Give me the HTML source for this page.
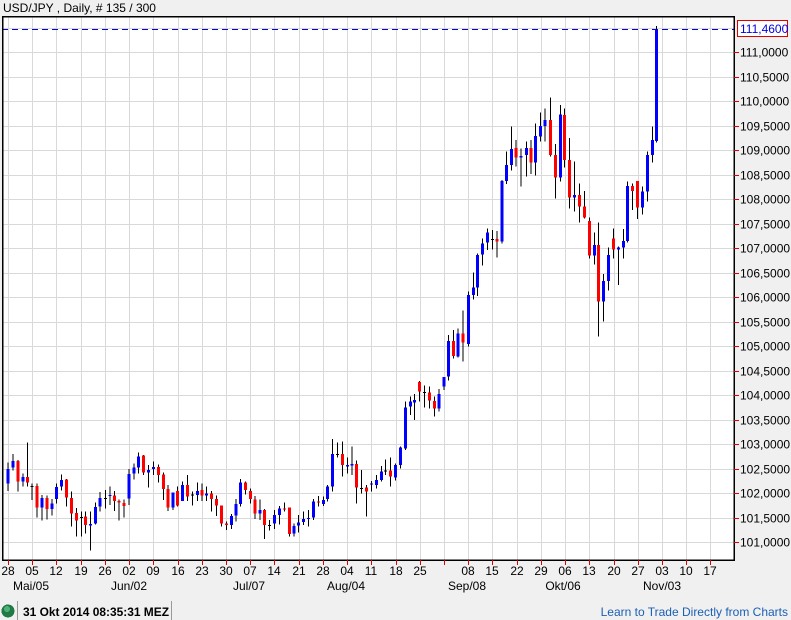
<!DOCTYPE html>
<html><head><meta charset="utf-8"><style>
html,body{margin:0;padding:0;background:#f0f0f0;width:791px;height:620px;overflow:hidden;font-family:"Liberation Sans",Arial,sans-serif}
</style></head><body>
<svg id="s" width="791" height="620" xmlns="http://www.w3.org/2000/svg" font-family="Liberation Sans, Arial, sans-serif" font-size="12" shape-rendering="crispEdges">
<rect x="0" y="0" width="791" height="620" fill="#f0f0f0"/>
<text x="3" y="12" fill="#000">USD/JPY , Daily, # 135 / 300</text>
<rect x="2" y="16" width="732" height="544" fill="#fff"/>
<g id="grid" stroke="#d9d9d9" stroke-width="1"></g>
<line x1="2" y1="29.5" x2="734" y2="29.5" stroke="#0000e0" stroke-dasharray="6,4" stroke-width="1"/>
<g id="c"></g>
<rect x="2.5" y="16.5" width="731.5" height="543.5" fill="none" stroke="#000" stroke-width="1.5"/>
<g id="ax"></g>
<rect x="737.5" y="20.5" width="50" height="16" fill="#fff" stroke="#e00000"/>
<text x="740" y="33" fill="#0000e0">111,4600</text>
<circle cx="8" cy="611" r="6.5" fill="#1f7a45"/>
<circle cx="7" cy="609" r="3" fill="#4fb07a"/>
<line x1="17.5" y1="601" x2="17.5" y2="620" stroke="#999"/>
<text x="23" y="616" font-weight="bold" font-size="12" textLength="146" lengthAdjust="spacingAndGlyphs">31 Okt 2014 08:35:31 MEZ</text>
<line x1="171.5" y1="601" x2="171.5" y2="620" stroke="#999"/>
<text x="788" y="616" fill="#1a5fb4" text-anchor="end">Learn to Trade Directly from Charts</text>
</svg>
<script>
var NS="http://www.w3.org/2000/svg";
function el(p,t,a,txt){var e=document.createElementNS(NS,t);for(var k in a)e.setAttribute(k,a[k]);if(txt)e.textContent=txt;p.appendChild(e);return e;}
var g=document.getElementById('grid'),ax=document.getElementById('ax'),c=document.getElementById('c');
var dx=24.22;
for(var k=0;k<30;k++){var x=Math.round(8+k*dx)+0.5;el(g,'line',{x1:x,y1:17,x2:x,y2:560});}
for(var k=0;k<22;k++){var y=Math.round(542-24.5*k)+0.5;el(g,'line',{x1:3,y1:y,x2:734,y2:y});}
var days=["28","05","12","19","26","02","09","16","23","30","07","14","21","28","04","11","18","25","","08","15","22","29","06","13","20","27","03","10","17"];
for(var k=0;k<30;k++){var x=Math.round(8+k*dx);el(ax,'line',{x1:x+.5,y1:560,x2:x+.5,y2:565,stroke:'#e00000'});if(days[k])el(ax,'text',{x:x,y:575,'text-anchor':'middle'},days[k]);}
var mons=[["Mai/05",31],["Jun/02",129],["Jul/07",249],["Aug/04",346],["Sep/08",467],["Okt/06",563],["Nov/03",662]];
mons.forEach(function(m){el(ax,'text',{x:m[1],y:590,'text-anchor':'middle'},m[0]);});
for(var k=0;k<21;k++){var y=Math.round(542-24.5*k);el(ax,'line',{x1:734,y1:y+.5,x2:739,y2:y+.5,stroke:'#e00000'});el(ax,'text',{x:740,y:y+4.5},(101+k*0.5).toFixed(4).replace('.',','));}
function seg(ox,oy,data){var gg=el(c,'g',{transform:'translate('+ox+','+oy+') scale(0.33333)'});
data.forEach(function(d){var x=d[0];el(gg,'rect',{x:x-1.5,y:d[3],width:3,height:d[4]-d[3],fill:'#000'});
var col=d[5]=='b'?'#0000ff':d[5]=='r'?'#ff0000':'#000';var h=Math.max(d[2]-d[1],3);el(gg,'rect',{x:x-4.5,y:d[1],width:9,height:h,fill:col});});}
seg(0,430,[[24,117,160,97,183,'b'],[39,93,113,72,122,'b'],[54,93,155,90,185,'r'],[69,141,155,130,170,'b'],[82,141,158,37,170,'r'],[96,168,170,160,210,'k'],[111,168,233,160,263,'r'],[126,204,233,195,272,'b'],[141,204,237,197,268,'r'],[156,220,237,207,257,'b'],[170,171,207,160,220,'b'],[184,150,170,133,182,'b'],[199,149,203,147,230,'r'],[214,204,250,185,290,'r'],[229,249,272,234,320,'r'],[244,261,263,244,320,'k'],[256,260,285,244,310,'r'],[271,282,287,245,362,'b'],[286,231,281,218,283,'b'],[300,204,230,186,245,'b'],[316,204,206,180,235,'k'],[330,195,198,170,225,'b'],[343,196,213,183,243,'r'],[357,213,218,208,272,'r'],[372,219,228,208,262,'r'],[387,132,205,117,225,'b'],[402,113,131,100,148,'b'],[416,80,113,68,130,'b'],[430,77,128,75,135,'r'],[445,120,128,105,172,'b'],[460,111,117,95,135,'b'],[475,111,135,103,158,'r'],[490,133,177,128,210,'r'],[504,177,233,165,243,'r'],[519,188,233,188,240,'b'],[533,183,227,170,230,'r'],[548,165,213,155,213,'b'],[562,165,200,135,213,'r'],[577,194,196,185,227,'k'],[592,183,195,158,213,'b'],[606,180,197,160,213,'r'],[620,190,197,170,213,'b'],[635,190,207,183,245,'r'],[650,207,227,197,258,'r'],[664,227,280,227,290,'r'],[679,280,285,275,300,'r'],[694,258,285,252,297,'b'],[708,222,257,207,275,'b'],[722,158,222,147,230,'b'],[736,158,180,155,193,'r'],[751,183,207,175,220,'r'],[765,208,250,198,267,'r'],[780,240,250,208,270,'b'],[794,240,285,237,327,'r'],[808,285,287,270,302,'k'],[823,255,280,240,297,'b'],[838,235,255,228,283,'b'],[853,235,238,218,245,'r'],[868,233,312,233,320,'r'],[882,288,310,280,320,'b'],[896,277,287,255,307,'b'],[910,267,276,245,285,'b'],[925,264,267,240,290,'b'],[940,215,263,207,270,'b'],[955,215,218,198,230,'r']]);
seg(320,220,[[10,840,852,830,858,'b'],[22,800,837,795,845,'b'],[37,702,800,657,815,'b'],[53,702,704,668,712,'k'],[67,702,735,665,770,'r'],[82,735,740,712,760,'b'],[96,732,736,680,765,'b'],[109,732,803,722,850,'r'],[124,804,806,750,820,'k'],[140,803,815,795,890,'r'],[154,791,794,783,815,'b'],[169,780,795,765,805,'b'],[184,755,780,738,785,'b'],[197,752,754,718,765,'k'],[211,752,770,712,800,'r'],[226,735,772,730,782,'b'],[241,683,735,680,745,'b'],[256,562,685,545,690,'b'],[271,545,560,530,585,'b'],[284,540,548,522,600,'b'],[298,486,515,483,545,'r'],[313,516,518,497,563,'k'],[328,517,542,500,565,'r'],[343,543,566,530,590,'r'],[357,522,566,507,575,'b'],[372,471,500,471,510,'b'],[385,363,470,345,482,'b'],[400,363,408,330,416,'r'],[414,340,410,325,412,'b'],[429,340,368,272,425,'r'],[445,225,372,215,380,'b'],[460,202,225,158,238,'b'],[472,105,203,100,228,'b'],[487,70,104,55,137,'b'],[502,37,68,25,90,'b'],[517,57,59,30,88,'k'],[531,57,65,33,113,'r']]);
seg(495,20,[[21,483,665,480,670,'b'],[35,435,483,395,492,'b'],[49,387,435,320,452,'b'],[63,384,413,360,440,'r'],[78,408,413,385,500,'b'],[94,384,405,365,470,'b'],[108,384,428,360,462,'r'],[121,348,428,310,467,'b'],[136,318,350,278,365,'b'],[150,300,318,265,365,'b'],[166,300,405,232,410,'r'],[181,405,473,372,536,'r'],[196,283,473,255,485,'b'],[208,285,420,265,443,'r'],[223,420,533,354,566,'r'],[238,525,533,425,575,'b'],[253,525,560,490,607,'r'],[268,560,592,513,595,'r'],[283,603,707,592,716,'r'],[298,675,707,637,733,'b'],[310,675,845,608,950,'r'],[325,783,845,762,905,'b'],[340,705,783,682,812,'b'],[355,655,688,625,716,'r'],[370,683,689,680,795,'b'],[385,663,683,627,716,'b'],[397,498,663,485,668,'b'],[412,498,513,490,570,'r'],[427,483,563,483,597,'r'],[442,515,563,500,583,'b'],[457,405,515,395,545,'b'],[472,360,405,320,428,'b'],[484,28,363,18,367,'b']]);
</script>
</body></html>
